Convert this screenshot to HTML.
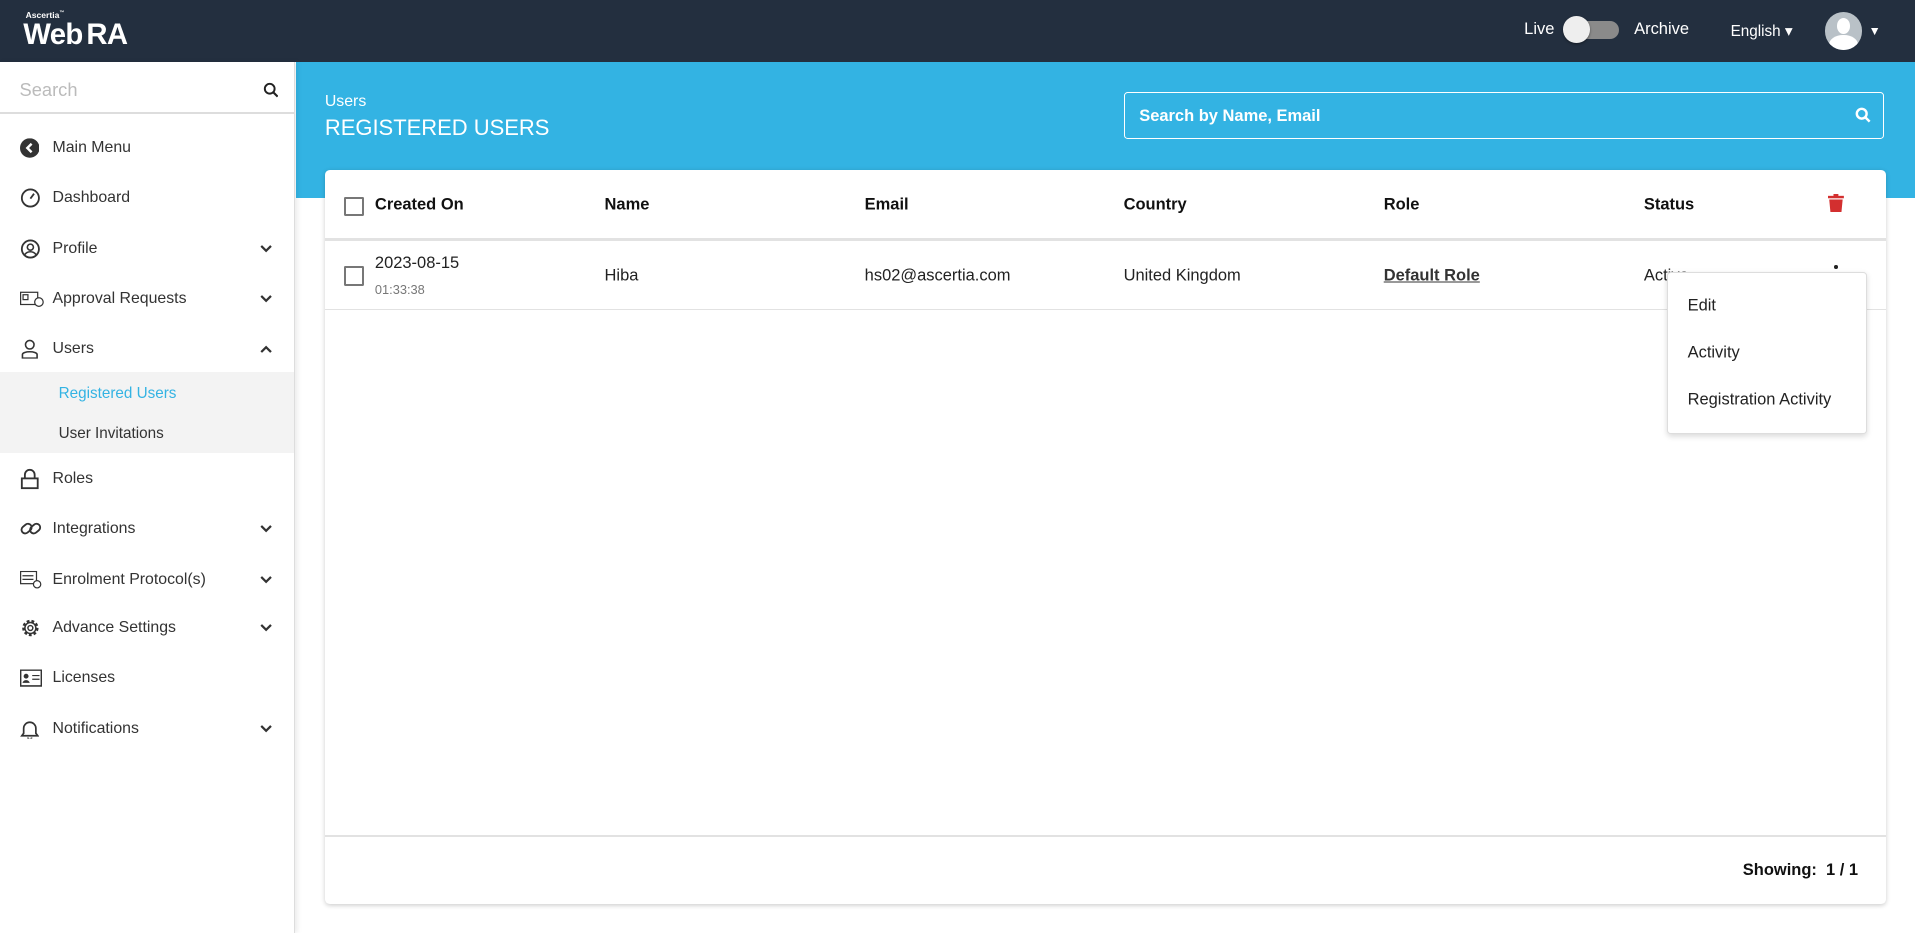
<!DOCTYPE html>
<html><head><meta charset="utf-8"><style>
html,body{margin:0;padding:0;overflow:hidden;background:#fff}
body{width:1568px;height:764px;zoom:1.22130;position:relative;font-family:"Liberation Sans",sans-serif;color:#222}
*{white-space:nowrap}
.abs{position:absolute}
.hdr{left:0;top:0;width:1568px;height:51px;background:#232f3f}
.side{left:0;top:51px;width:241px;height:713px;background:#fff;border-right:1px solid #ddd;box-shadow:2px 0 4px rgba(0,0,0,.08)}
.mi{position:absolute;left:0;width:241px;height:41px;font-size:13px;color:#333}
.mi span.t{position:absolute;left:43px;top:50%;transform:translateY(-50%)}
.mi svg.ic{position:absolute;left:16px;top:50%;transform:translateY(-50%)}
.mi svg.ch{position:absolute;left:213px;top:50%;transform:translateY(-50%)}
.band{left:242px;top:51px;width:1326px;height:111px;background:#33b3e3}
.card{left:266px;top:139px;width:1278px;height:601px;background:#fff;border-radius:4px;box-shadow:0 1px 4px rgba(0,0,0,.2)}
.th{position:absolute;top:29px;font-weight:bold;font-size:13.5px;color:#111;transform:translateY(-50%)}
.td{position:absolute;top:87px;font-size:13.5px;color:#222;transform:translateY(-50%)}
.cb{position:absolute;left:16px;width:13px;height:13px;border:2px solid #777;border-radius:1px}
.menu{left:1365px;top:223px;width:162px;height:131px;background:#fff;border:1px solid #ddd;border-radius:3px;box-shadow:0 2px 5px rgba(0,0,0,.15)}
.menu div{position:absolute;left:16px;font-size:13.5px;color:#222;transform:translateY(-50%)}
</style></head><body>
<div class="abs hdr">
 <div class="abs" style="left:21px;top:8px;color:#fff;font-size:7px;font-weight:bold">Ascertia<sup style="font-size:4px">™</sup></div>
 <div class="abs" style="left:19px;top:15px;color:#fff;font-size:24px;font-weight:bold;letter-spacing:-0.5px">Web<span style="margin-left:3px">RA</span></div>
 <div class="abs" style="left:1248px;top:16px;color:#fff;font-size:13.5px">Live</div>
 <div class="abs" style="left:1285px;top:17px;width:41px;height:15px;border-radius:8px;background:#8a8a8a"></div>
 <div class="abs" style="left:1280px;top:13px;width:22px;height:22px;border-radius:50%;background:#eee;box-shadow:0 1px 2px rgba(0,0,0,.4)"></div>
 <div class="abs" style="left:1338px;top:16px;color:#fff;font-size:13.5px">Archive</div>
 <div class="abs" style="left:1417px;top:18px;color:#fff;font-size:12.5px">English ▾</div>
 <div class="abs" style="left:1494px;top:10px;width:31px;height:31px;border-radius:50%;background:#b9c1c7;overflow:hidden">
  <div class="abs" style="left:10px;top:5px;width:11px;height:13px;border-radius:50%;background:#fff"></div>
  <div class="abs" style="left:4px;top:19px;width:23px;height:16px;border-radius:50% 50% 0 0;background:#fff"></div>
 </div>
 <div class="abs" style="left:1530px;top:20px;color:#fff;font-size:10px">▼</div>
</div>
<div class="abs band">
 <div class="abs" style="left:24px;top:25px;color:#fff;font-size:13px">Users</div>
 <div class="abs" style="left:24px;top:43px;color:#fff;font-size:18px">REGISTERED USERS</div>
 <div class="abs" style="left:678px;top:24px;width:621px;height:37px;border:1px solid #fff;border-radius:3px">
  <div class="abs" style="left:12px;top:12px;color:#fff;font-size:13.5px;font-weight:bold">Search by Name, Email</div>
  <svg class="abs" style="left:598px;top:12px" width="13" height="13" viewBox="0 0 13 13"><circle cx="5.5" cy="5.5" r="4" fill="none" stroke="#fff" stroke-width="2"/><path d="M8.5 8.5l3.5 3.5" stroke="#fff" stroke-width="2"/></svg>
 </div>
</div>
<div class="abs side">
 <div class="abs" style="left:16px;top:14px;font-size:15px;color:#bbb">Search</div>
 <svg class="abs" style="left:215px;top:16px" width="13" height="13" viewBox="0 0 13 13"><circle cx="5.5" cy="5.5" r="4" fill="none" stroke="#222" stroke-width="1.6"/><path d="M8.5 8.5l3.5 3.5" stroke="#222" stroke-width="1.8"/></svg>
 <div class="abs" style="left:0;top:41px;width:241px;height:1px;background:#ddd"></div>
</div>
<div class="abs" style="left:0;top:0;width:241px">
 <div class="mi" style="top:101px"><svg class="ic" width="16" height="16"><circle cx="8" cy="8" r="8" fill="#333"/><path d="M9.5 4.5L6 8l3.5 3.5" stroke="#fff" stroke-width="2" fill="none"/></svg><span class="t">Main Menu</span></div>
 <div class="mi" style="top:142px"><svg class="ic" width="17" height="17"><circle cx="8.5" cy="8.5" r="7" fill="none" stroke="#333" stroke-width="1.5"/><path d="M8.5 9l3-4" stroke="#333" stroke-width="1.5"/></svg><span class="t">Dashboard</span></div>
 <div class="mi" style="top:183px"><svg class="ic" width="17" height="17"><circle cx="8.5" cy="8.5" r="7" fill="none" stroke="#333" stroke-width="1.5"/><circle cx="8.5" cy="7" r="2.5" fill="none" stroke="#333" stroke-width="1.3"/><path d="M4 13c2-3 7-3 9 0" stroke="#333" stroke-width="1.3" fill="none"/></svg><span class="t">Profile</span><svg class="ch" width="10" height="7"><path d="M1 1l4 4 4-4" stroke="#333" stroke-width="1.8" fill="none"/></svg></div>
 <div class="mi" style="top:224px"><svg class="ic" width="20" height="14"><rect x="0.5" y="1.5" width="14" height="10" fill="none" stroke="#333"/><rect x="2.5" y="3.5" width="4" height="4" fill="none" stroke="#333"/><circle cx="15.5" cy="9.5" r="3.5" fill="#fff" stroke="#333"/></svg><span class="t">Approval Requests</span><svg class="ch" width="10" height="7"><path d="M1 1l4 4 4-4" stroke="#333" stroke-width="1.8" fill="none"/></svg></div>
 <div class="mi" style="top:265px"><svg class="ic" width="16" height="17"><circle cx="8" cy="5" r="3.5" fill="none" stroke="#333" stroke-width="1.3"/><path d="M2 16v-3c0-3 12-3 12 0v3z" fill="none" stroke="#333" stroke-width="1.3"/></svg><span class="t">Users</span><svg class="ch" width="10" height="7"><path d="M1 6l4-4 4 4" stroke="#333" stroke-width="1.8" fill="none"/></svg></div>
 <div class="abs" style="left:0;top:305px;width:241px;height:66px;background:#f3f3f3"></div>
 <div class="abs" style="left:48px;top:315px;font-size:12.5px;color:#33b3e3">Registered Users</div>
 <div class="abs" style="left:48px;top:348px;font-size:12.5px;color:#333">User Invitations</div>
 <div class="mi" style="top:372px"><svg class="ic" width="16" height="17"><path d="M4 8V5a4 4 0 0 1 8 0v3" fill="none" stroke="#333" stroke-width="1.5"/><rect x="1.5" y="8" width="13" height="8" fill="none" stroke="#333" stroke-width="1.5"/></svg><span class="t">Roles</span></div>
 <div class="mi" style="top:413px"><svg class="ic" width="18" height="16"><rect x="1" y="5" width="9" height="6" rx="3" transform="rotate(-40 5 8)" fill="none" stroke="#333" stroke-width="1.5"/><rect x="8" y="5" width="9" height="6" rx="3" transform="rotate(-40 12 8)" fill="none" stroke="#333" stroke-width="1.5"/></svg><span class="t">Integrations</span><svg class="ch" width="10" height="7"><path d="M1 1l4 4 4-4" stroke="#333" stroke-width="1.8" fill="none"/></svg></div>
 <div class="mi" style="top:454px"><svg class="ic" width="18" height="15"><rect x="0.5" y="0.5" width="13" height="10" fill="none" stroke="#333"/><path d="M2 4h9M2 7h9" stroke="#333"/><circle cx="14" cy="11" r="3" fill="#fff" stroke="#333"/></svg><span class="t">Enrolment Protocol(s)</span><svg class="ch" width="10" height="7"><path d="M1 1l4 4 4-4" stroke="#333" stroke-width="1.8" fill="none"/></svg></div>
 <div class="mi" style="top:494px"><svg class="ic" width="17" height="17"><circle cx="8.5" cy="8.5" r="5.5" fill="none" stroke="#333" stroke-width="2.4" stroke-dasharray="2.2 1.6"/><circle cx="8.5" cy="8.5" r="4.5" fill="none" stroke="#333" stroke-width="1.2"/><circle cx="8.5" cy="8.5" r="2" fill="none" stroke="#333" stroke-width="1.2"/></svg><span class="t">Advance Settings</span><svg class="ch" width="10" height="7"><path d="M1 1l4 4 4-4" stroke="#333" stroke-width="1.8" fill="none"/></svg></div>
 <div class="mi" style="top:535px"><svg class="ic" width="18" height="14"><rect x="0.5" y="0.5" width="17" height="13" fill="none" stroke="#333" stroke-width="1.3"/><circle cx="5" cy="5.5" r="2" fill="#333"/><path d="M2 11c1-3 5-3 6 0z" fill="#333"/><path d="M10 5h6M10 8h6" stroke="#333"/></svg><span class="t">Licenses</span></div>
 <div class="mi" style="top:576px"><svg class="ic" width="16" height="17"><path d="M3 12V8a5 5 0 0 1 10 0v4l1.5 2h-13z" fill="none" stroke="#333" stroke-width="1.4"/><path d="M6.5 15.5a1.5 1.5 0 0 0 3 0" fill="none" stroke="#333" stroke-width="1.3"/></svg><span class="t">Notifications</span><svg class="ch" width="10" height="7"><path d="M1 1l4 4 4-4" stroke="#333" stroke-width="1.8" fill="none"/></svg></div>
</div>
<div class="abs card">
 <div class="cb" style="top:22px"></div>
 <div class="th" style="left:41px">Created On</div>
 <div class="th" style="left:229px">Name</div>
 <div class="th" style="left:442px">Email</div>
 <div class="th" style="left:654px">Country</div>
 <div class="th" style="left:867px">Role</div>
 <div class="th" style="left:1080px">Status</div>
 <svg class="abs" style="left:1231px;top:20px" width="13" height="15" viewBox="0 0 13 15"><rect x="0" y="1.5" width="13" height="2" fill="#d32f2f"/><rect x="4.5" y="0" width="4" height="2" fill="#d32f2f"/><path d="M1 4.5h11l-1 10.5H2z" fill="#d32f2f"/></svg>
 <div class="abs" style="left:0;top:56px;width:1278px;height:2px;background:#e2e2e2"></div>
 <div class="cb" style="top:79px"></div>
 <div class="abs" style="left:41px;top:69px;font-size:13.5px;color:#222">2023-08-15</div>
 <div class="abs" style="left:41px;top:92px;font-size:10.5px;color:#777">01:33:38</div>
 <div class="td" style="left:229px">Hiba</div>
 <div class="td" style="left:442px">hs02@ascertia.com</div>
 <div class="td" style="left:654px">United Kingdom</div>
 <div class="td" style="left:867px;font-weight:bold;text-decoration:underline;color:#333">Default Role</div>
 <div class="td" style="left:1080px">Active</div>
 <div class="abs" style="left:1236px;top:78px;width:3px;height:3px;border-radius:50%;background:#222"></div>
 <div class="abs" style="left:0;top:114px;width:1278px;height:1px;background:#e2e2e2"></div>
 <div class="abs" style="left:0;top:545px;width:1278px;height:1px;background:#e2e2e2"></div>
 <div class="abs" style="left:1161px;top:566px;font-size:13.5px;font-weight:bold;color:#111">Showing:&nbsp; 1 / 1</div>
</div>
<div class="abs menu">
 <div style="top:27px">Edit</div>
 <div style="top:65px">Activity</div>
 <div style="top:104px">Registration Activity</div>
</div>
</body></html>
